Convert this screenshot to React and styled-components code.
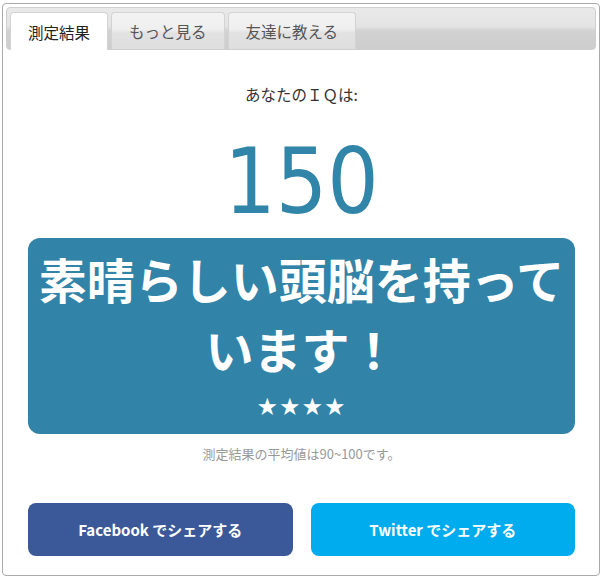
import React from 'react';
import styled, { createGlobalStyle } from 'styled-components';

const GlobalStyle = createGlobalStyle`
  body {
    margin: 0;
    background: #fff;
    font-family: "Noto Sans CJK JP", "Noto Sans", sans-serif;
  }
`;

// ---- tab labels
const tabs = ['測定結果', 'もっと見る', '友達に教える'];

const App = () => {
  return (
    <>
      <GlobalStyle />
      <Frame>
        <TabBar>
          {tabs.map((t, i) => (
            <Tab key={t} active={i === 0}>{t}</Tab>
          ))}
        </TabBar>
        <Panel>
          <Lead>あなたのＩＱは:</Lead>
          <Score>150</Score>
          <ResultBox>
            <ResultText>素晴らしい頭脳を持っています！</ResultText>
            <Stars>★★★★</Stars>
          </ResultBox>
          <Note>測定結果の平均値は90~100です。</Note>
          <ShareRow>
            <ShareButton color="#3b5998">Facebook でシェアする</ShareButton>
            <ShareButton color="#00acee">Twitter でシェアする</ShareButton>
          </ShareRow>
        </Panel>
      </Frame>
    </>
  );
};

export default App;

// ------ UI components
const Frame = styled.div`
  width: 590px;
  margin: 3px 0 0 2px;
  border: 1px solid #aaa;
  border-radius: 4px;
  padding: 3px;
  background: #fff;
`;

const TabBar = styled.div`
  display: flex;
  gap: 3px;
  padding: 4px 3px 0;
  height: 37px;
  border: 1px solid #cfcfcf;
  border-radius: 4px;
  background: linear-gradient(#e9e9e9, #e4e4e4 45%, #d2d2d2 55%, #cdcdcd);
`;

const Tab = styled.div`
  padding: 0 17px;
  height: ${(p) => (p.active ? '37px' : '36px')};
  margin-bottom: ${(p) => (p.active ? '-1px' : '0')};
  display: flex;
  align-items: center;
  font-size: 15.5px;
  color: ${(p) => (p.active ? '#222' : '#555')};
  border: 1px solid #d3d3d3;
  border-bottom: none;
  border-radius: 4px 4px 0 0;
  background: ${(p) =>
    p.active ? '#fff' : 'linear-gradient(#f3f3f3, #efefef 45%, #e2e2e2 55%, #dedede)'};
  position: relative;
  z-index: 1;
`;

const Panel = styled.div`
  display: flex;
  flex-direction: column;
  align-items: center;
  padding: 0 21px 16px 22px;
`;

const Lead = styled.div`
  margin-top: 34px;
  font-size: 15.5px;
  line-height: 20px;
  color: #333;
`;

const Score = styled.div`
  margin-top: 31px;
  font-family: "DejaVu Sans Condensed", "DejaVu Sans", sans-serif;
  font-stretch: condensed;
  font-size: 90px;
  line-height: 94px;
  color: #3185a8;
`;

const ResultBox = styled.div`
  align-self: stretch;
  margin-top: 9px;
  padding: 5px 6px 11px;
  border-radius: 12px;
  background: #3183a8;
  color: #fff;
  text-align: center;
`;

const ResultText = styled.div`
  font-size: 48px;
  font-weight: 700;
  line-height: 70px;
`;

const Stars = styled.div`
  margin-top: 8px;
  font-family: "DejaVu Sans", sans-serif;
  font-size: 24px;
  line-height: 32px;
  letter-spacing: 1px;
`;

const Note = styled.div`
  margin-top: 11px;
  font-size: 13px;
  line-height: 18px;
  color: #999;
`;

const ShareRow = styled.div`
  align-self: stretch;
  margin-top: 40px;
  display: grid;
  grid-template-columns: 1fr 1fr;
  gap: 18px;
`;

const ShareButton = styled.div`
  height: 53px;
  display: flex;
  align-items: center;
  justify-content: center;
  border-radius: 8px;
  background: ${(p) => p.color};
  color: #fff;
  font-size: 15px;
  font-weight: 700;
`;
